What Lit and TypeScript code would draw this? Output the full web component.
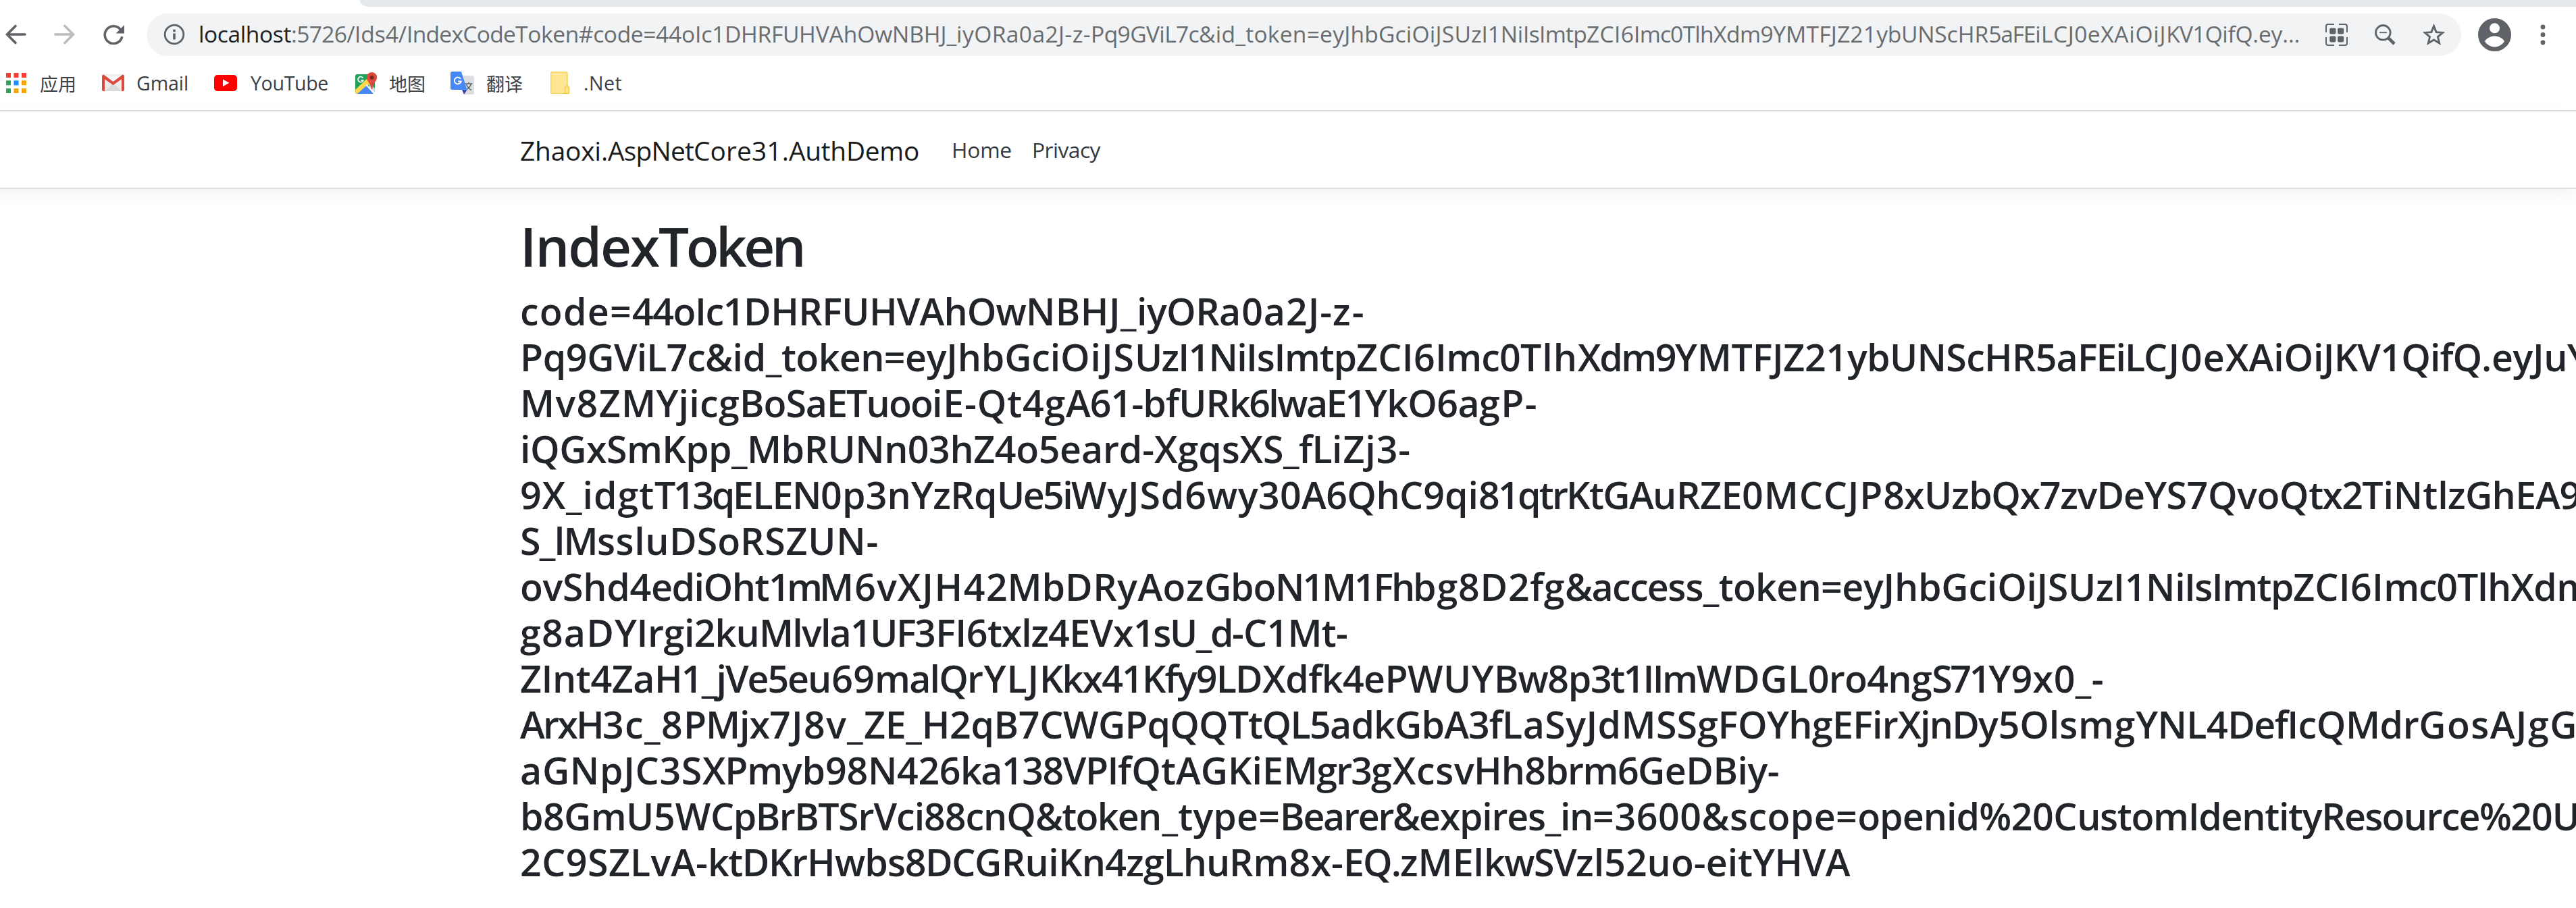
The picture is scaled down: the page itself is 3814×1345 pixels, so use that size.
import { LitElement, html, css, svg } from "lit";
import { customElement, property } from "lit/decorators.js";
import { styleMap } from "lit/directives/style-map.js";

const FAMILY = '"Open Sans", "Noto Sans CJK SC", sans-serif';
const ctx = document.createElement("canvas").getContext("2d")!;

/** Letter spacing that makes a run of text advance exactly `width` pixels. */
function tracking(text: string, width: number, size: number, weight: number): string {
  ctx.font = `${weight} ${size}px ${FAMILY}`;
  (ctx as any).fontKerning = "none";
  return `${((width - ctx.measureText(text).width) / text.length).toFixed(3)}px`;
}

/**
 * A line of text with tab-like stops: "0 abc 40 def 90" puts "abc" on 0..40
 * and "def" on 40..90.
 */
@customElement("tracked-text")
class TrackedText extends LitElement {
  @property() stops = "";
  @property({ type: Number }) size = 16;
  @property({ type: Number }) weight = 400;

  static styles = css`
    :host {
      display: block;
      white-space: nowrap;
      font-kerning: none;
    }
    .lead {
      color: var(--lead, inherit);
    }
  `;

  render() {
    const parts = this.stops.trim().split(/\s+/);
    const runs = [];
    for (let i = 0; i + 2 < parts.length; i += 2) {
      const w = Number(parts[i + 2]) - Number(parts[i]);
      const spacing = tracking(parts[i + 1], w, this.size, this.weight);
      runs.push(
        html`<span class=${i === 0 ? "lead" : "run"} style=${styleMap({ letterSpacing: spacing })}>${parts[i + 1]}</span>`
      );
    }
    return html`${runs}`;
  }
}

const URL_STOPS =
  "293 localhost 430 :5726/ 524 Ids4/ 601 IndexCode 762 Token#code= 970 44oIc1 1072 DHRFU 1182 HVAhOw 1320 NBHJ_ 1415 iyORa0a2J-z- 1614 Pq9GViL7c 1774 &id_token= 1953 eyJhbGciOiJSU 2177 zI1Ni 2254 IsImtp 2348 ZCI6 2418 Imc0T 2508 lhXdm9 2624 YMTFJZ21 2777 ybUN 2863 ScHR 2943 5aFE 3012 iLCJ0e 3109 XAiOiJ 3206 KV1Q 3289 ifQ 3334 .ey… 3404";

const LINES = [
  "769 code= 935 44oIc1 1100 DHRFU 1286 HVAhOw 1518 NBHJ_ 1682 iyOR 1804 a0a2J- 1972 z- 2021",
  "769 Pq9G 908 ViL7c 1043 &id_ 1156 token= 1339 eyJhbGci 1569 OiJS 1679 UzI1Ni 1844 IsI 1901 mtp 2007 ZCI6 2124 Imc0 2250 Tlh 2335 Xdm9 2479 YMTFJZ21 2734 ybUNSc 2937 HR5a 3075 FEiL 3173 CJ0e 3294 XAiO 3424 iJKV1Q 3597 ifQ 3673 .eyJu 3800 Y 3832",
  "769 Mv8Z 919 MYjicg 1094 BoSa 1223 ETuoo 1379 iE-Qt4g 1577 A61-bfUR 1819 k6lwaE1 2020 YkO6a 2189 gP- 2276",
  "769 iQGxS 927 mKpp_ 1105 MbRUNn0 1374 3hZ4o5 1568 eard- 1708 XgqsX 1869 S_fL 1971 iZj3- 2088",
  "769 9X_idgt 968 T13q 1084 ELEN 1214 0p3n 1348 YzRq 1475 Ue5i 1585 WyJSd6w 1832 y30 1926 A6Qh 2071 C9qi 2188 81qtr 2318 KtGA 2446 uRZE 2578 0MCCJP 2787 8xUz 2914 bQx7 3049 zvDe 3174 YS7Q 3311 voQ 3417 tx2 3496 TiNt 3608 lzGh 3723 EA9 3819",
  "769 S_lM 883 sslu 990 DSo 1095 RSZUN- 1300",
  "769 ovShd4 963 ediOht 1137 1m 1212 M6v 1328 XJH4 1459 2Mb 1576 DRyAoz 1782 Gbo 1887 N1M1Fh 2091 bg8D 2232 2fg 2316 &acce 2468 ss_token= 2726 eyJhbGci 2956 OiJSUzI1N 3219 iIsI 3289 mtp 3394 ZCI6I 3528 mc0T 3667 lhXd 3784 m 3835",
  "769 g8aD 909 YIrg 1012 i2ku 1123 Mlvla 1258 1UF 1353 3FI6 1461 txlz 1551 4EVx 1677 1sU_d 1823 -C1Mt- 1994",
  "769 ZInt4Za 968 H1_j 1073 Ve5e 1195 u69 1294 malQ 1431 rYLJ 1538 Kkx4 1660 1Kfy9L 1828 DXdfk4eP 2083 WUY 2211 Bw8p 2354 3t1II 2460 m 2511 WDG 2646 L0ro4ng 2859 S71 2943 Y9x0_- 3114",
  "771 ArxH 893 3c_8 1013 PMjx 1140 7J8v_ 1280 ZE_H 1407 2qB7CW 1627 GPqQQT 1849 tQL5 1970 adkGbA3f 2225 LaSyJdM 2453 SSgF 2574 OYhgEFir 2811 XjnD 2930 y5Ol 3050 smg 3163 YNL4 3299 Def 3387 IcQMdr 3582 GosAJg 3776 G 3816",
  "769 aGNpJC3S 1039 XPm 1157 yb98 1284 N426 1421 ka138VPI 1654 fQtAGKiE 1899 Mgr3 2029 gXcs 2152 vHh8 2287 brm6 2424 GeDBiy- 2633",
  "769 b8Gm 926 U5W 1051 CpBrBT 1240 SrVci88cnQ 1532 &toke 1684 n_type= 1894 Bearer 2061 & 2100 expires_in 2357 =3600& 2560 scope= 2749 openid 2929 %20C 3074 ustomIdentity 3436 Resource% 3716 20U 3818",
  "769 2C9S 900 ZLvA- 1047 ktDK 1171 rHwb 1313 s8DC 1442 GRui 1566 Kn4z 1692 gLhu 1819 Rm8x- 1988 EQ. 2072 zMEl 2196 kwSV 2332 zl52uo-eit 2594 YHVA 2738",
];

const icons = {
  back: svg`<path d="M37 16H11M23 3.5 10.5 16 23 28.5" fill="none" stroke="#5f6368" stroke-width="3.6" stroke-linecap="round" stroke-linejoin="miter"/>`,
  forward: svg`<path d="M2 16h26M16 3.5 28.5 16 16 28.5" fill="none" stroke="#bbbcbe" stroke-width="3.6" stroke-linecap="round"/>`,
  reload: svg`<path d="M27.4 19.6A12.9 12.9 0 1 1 25.4 7.8" fill="none" stroke="#5f6368" stroke-width="3.6" stroke-linecap="round"/><path d="M31 1v12.6H18.6z" fill="#5f6368"/>`,
  info: svg`<circle cx="16" cy="16" r="13.8" fill="none" stroke="#5f6368" stroke-width="2.8"/><path d="M14.2 8.8h3.6v3.4h-3.6zM14.2 14.4h3.6v9h-3.6z" fill="#5f6368"/>`,
  qr: svg`<g fill="none" stroke="#5f6368" stroke-width="2"><path d="M1 13V4q0-3 3-3h9M20 1h9q3 0 3 3v9M32 20v9q0 3-3 3h-9M13 32H4q-3 0-3-3v-9"/></g><g fill="#5f6368"><rect x="6.2" y="6.4" width="9.2" height="9" rx="1.8"/><rect x="18" y="6.4" width="9.2" height="9" rx="1.8"/><rect x="6.2" y="18.4" width="9.2" height="9" rx="1.8"/><rect x="18" y="18.4" width="9.2" height="9" rx="1.8"/></g>`,
  zoom: svg`<g fill="none" stroke="#5f6368"><circle cx="12.3" cy="12.3" r="10.8" stroke-width="2.8"/><path d="M7 12.2h11" stroke-width="1.8"/><path d="m20.5 20.5 8.5 8.5" stroke-width="4.6"/></g>`,
  star: svg`<path d="m16.5 3.6 3.6 9 9.6.8-7.3 6.2 2.3 9.4-8.2-5-8.2 5 2.3-9.4-7.3-6.2 9.6-.8z" fill="none" stroke="#5f6368" stroke-width="2.9"/>`,
  avatar: svg`<circle cx="24.5" cy="24.5" r="24.5" fill="#5f6368"/><circle cx="24.5" cy="14.8" r="7.5" fill="#fff"/><path d="M10 34.2c3-5 9-7.6 14.5-7.6s11.5 2.6 14.5 7.6c-3 5-9 8.4-14.5 8.4s-11.5-3.4-14.5-8.4z" fill="#fff"/>`,
  kebab: svg`<g fill="#5f6368"><circle cx="4" cy="4" r="3.4"/><circle cx="4" cy="15.5" r="3.4"/><circle cx="4" cy="27" r="3.4"/></g>`,
  apps: svg`<path d="M0 0h7v7H0zM11.5 0h7v7h-7zM23 0h7v7h-7z" fill="#fb3c35"/><path d="M0 11.3h7v7H0zM0 23h7v7H0z" fill="#2fa35a"/><path d="M11.5 11.3h7v7h-7z" fill="#1a8cff"/><path d="M23 11.3h7v7h-7zM11.5 23h7v7h-7zM23 23h7v7h-7z" fill="#f2a60c"/>`,
  gmail: svg`<rect x="1" y="0" width="31" height="25" rx="2" fill="#ececec"/><path d="M4 25 16.5 13 29 25z" fill="#dadada"/><path d="M4 2h25L16.5 13z" fill="#f7f7f7"/><path d="M0 3.5Q0 .5 2.5.5L16.5 11 30.5.5Q33 .5 33 3.5V23q0 2-2 2h-2V7.2L16.5 16 4 7.2V25H2q-2 0-2-2z" fill="#dc4a3e"/>`,
  youtube: svg`<rect width="34" height="24" rx="5" fill="#f00"/><path d="m13 6.5 9.5 5.2L13 17z" fill="#fff"/>`,
  maps: svg`<rect x="0" y="3" width="29" height="29" rx="3" fill="#1fa35c"/><path d="M20 15 29 24v5q0 3-3 3h-3z" fill="#d8dadd"/><path d="M0 26 20 7l4 8L4 32H3q-3 0-3-3z" fill="#fdd64b"/><path d="M17 17.8 30 31l-3 1h-2.5L14.5 21z" fill="#fff"/><path d="M3 32 16.5 20 27 32z" fill="#4788f4"/><path d="M11.5 8.7A4 4 0 1 0 11.8 12H8" fill="none" stroke="#fff" stroke-width="1.7"/><path d="M24.5 0a7.7 7.7 0 0 1 7.7 7.7c0 5.5-5.7 7.3-7 17.3h-1.4c-1.3-10-7-11.8-7-17.3A7.7 7.7 0 0 1 24.5 0z" fill="#de4a3d"/><circle cx="24.5" cy="7.7" r="3" fill="#7b231f"/>`,
  translate: svg`<path d="M14 6h18q3 0 3 3v22q0 3-3 3H21z" fill="#dcdee1"/><path d="M21.5 18h11M27 15.5V18M30.5 18q-1.5 6-8 9.5M23.5 19q2.5 6 7.5 8.5" fill="none" stroke="#5c6a72" stroke-width="1.5"/><path d="M17 27h7.5L20 34z" fill="#3a49b5"/><path d="M2.5 0H16l8.5 27H2.5Q0 27 0 24.5v-22Q0 0 2.5 0z" fill="#4788f4"/><path d="M15 10.7A5 5 0 1 0 15.7 14.5H11" fill="none" stroke="#fff" stroke-width="2"/>`,
  folder: svg`<path d="M2 .8h21q2 0 2 2V22q2.5 0 2.5 2.5V31q0 1.5-1.5 1.5H2q-1.2 0-1.2-1.5V2Q.8.8 2 .8z" fill="#ffe694" stroke="#f6d65c" stroke-width="1.6"/><path d="M25 22h-1.5q-2 0-2 2v6.5q0 2-2 2H26q1.500 0 1.500-1.500v-6.500q0-2.500-2.500-2.500z" fill="#fde48c" stroke="#f3cf4d" stroke-width="1.4"/>`,
};

const icon = (name: keyof typeof icons, w: number, h: number) =>
  html`<svg class="icon icon-${name}" width=${w} height=${h} viewBox="0 0 ${w} ${h}">${icons[name]}</svg>`;

@customElement("app-root")
class AppRoot extends LitElement {
  static styles = css`
    :host {
      display: block;
      width: 3814px;
      height: 1345px;
      overflow: hidden;
      background: #fff;
      font-family: "Open Sans", "Noto Sans CJK SC", sans-serif;
      color: #212529;
    }
    .icon {
      display: block;
      flex: none;
    }
    .tabs {
      height: 10px;
      padding-left: 533px;
    }
    .strip {
      height: 10px;
      background: #e5e9ec;
      border-bottom-left-radius: 14px 12px;
    }
    .toolbar {
      display: flex;
      align-items: center;
      height: 82px;
      box-sizing: border-box;
    }
    .icon-forward {
      margin-left: 41px;
    }
    .icon-reload {
      margin-left: 42px;
    }
    .omnibox {
      display: flex;
      align-items: center;
      box-sizing: border-box;
      width: 3427px;
      height: 63px;
      margin-left: 32px;
      padding-left: 25px;
      border-radius: 32px;
      background: #f1f3f4;
    }
    .url {
      --lead: #202124;
      flex: none;
      width: 3149px;
      margin-left: 20px;
      padding-bottom: 3px;
      font-size: 33.6px;
      line-height: 50px;
      color: #6a6d70;
    }
    .icon-zoom {
      margin-left: 40px;
    }
    .icon-star {
      margin-left: 40px;
    }
    .icon-avatar {
      margin-left: 25px;
    }
    .icon-kebab {
      margin-left: 43px;
    }
    .bookmarks {
      display: flex;
      align-items: center;
      box-sizing: border-box;
      height: 73px;
      padding: 0 0 10px 9px;
      border-bottom: 2px solid #dadce0;
      font-size: 28.6px;
      line-height: 40px;
      color: #3c4043;
    }
    .bookmark {
      display: flex;
      align-items: center;
    }
    .cjk {
      font-family: "Noto Sans CJK SC", sans-serif;
      font-size: 27px;
      white-space: nowrap;
      padding-top: 2px;
    }
    .navbar {
      display: flex;
      align-items: center;
      box-sizing: border-box;
      height: 115px;
      margin-left: -48px;
      padding: 3px 0 0 818px;
      border-bottom: 2px solid #dee2e6;
      box-shadow: 0 8px 24px rgba(0, 0, 0, 0.05);
    }
    .brand {
      width: 639px;
      font-size: 38.8px;
      color: #1a1a1a;
    }
    .link {
      padding-bottom: 3px;
      font-size: 31.8px;
      color: #343a40;
    }
    .home {
      width: 119px;
    }
    .content {
      padding: 36px 0 0 770px;
    }
    .title {
      margin: 0 0 15px;
      font-size: 80px;
      line-height: 96px;
      font-weight: 600;
    }
    .token {
      margin: 0;
      font-size: 55.5px;
      line-height: 68px;
      font-weight: 600;
    }
  `;

  private bookmark(name: keyof typeof icons, w: number, h: number, before: number, gap: number, text: string, width: number) {
    const cjk = /[\u4e00-\u9fff]/.test(text);
    return html`<div class="bookmark" style=${styleMap({ marginLeft: `${before}px`, gap: `${gap}px` })}>
      ${icon(name, w, h)}
      ${cjk
        ? html`<div class="cjk" style=${styleMap({ width: `${width}px` })}>${text}</div>`
        : html`<tracked-text style=${styleMap({ width: `${width}px` })} stops="0 ${text} ${width}" size="28.6"></tracked-text>`}
    </div>`;
  }

  render() {
    return html`
      <div class="tabs"><div class="strip"></div></div>
      <div class="toolbar">
        ${icon("back", 39, 32)} ${icon("forward", 31, 32)} ${icon("reload", 32, 30)}
        <div class="omnibox">
          ${icon("info", 32, 32)}
          <tracked-text class="url" size="33.6" .stops=${URL_STOPS}></tracked-text>
          ${icon("qr", 33, 33)} ${icon("zoom", 31, 31)} ${icon("star", 33, 33)}
        </div>
        ${icon("avatar", 49, 49)} ${icon("kebab", 8, 31)}
      </div>
      <div class="bookmarks">
        ${this.bookmark("apps", 30, 30, 0, 20, "应用", 54)}
        ${this.bookmark("gmail", 33, 25, 38, 18, "Gmail", 77)}
        ${this.bookmark("youtube", 34, 24, 38, 20, "YouTube", 115)}
        ${this.bookmark("maps", 33, 32, 40, 17, "地图", 54)}
        ${this.bookmark("translate", 35, 34, 37, 18, "翻译", 54)}
        ${this.bookmark("folder", 29, 33, 41, 20, ".Net", 57)}
      </div>
      <div class="navbar">
        <tracked-text class="brand" size="38.8" stops="769 Zhaoxi. 899 AspNet 1026 Core31. 1167 AuthDemo 1360"></tracked-text>
        <tracked-text class="link home" size="31.8" stops="1408 Home 1497"></tracked-text>
        <tracked-text class="link" size="31.8" stops="1527 Privacy 1628"></tracked-text>
      </div>
      <div class="content">
        <h1 class="title"><tracked-text size="80" weight="600" stops="769 Index 974 Token 1188"></tracked-text></h1>
        <h2 class="token">
          ${LINES.map((l) => html`<tracked-text size="55.5" weight="600" .stops=${l}></tracked-text>`)}
        </h2>
      </div>
    `;
  }
}
